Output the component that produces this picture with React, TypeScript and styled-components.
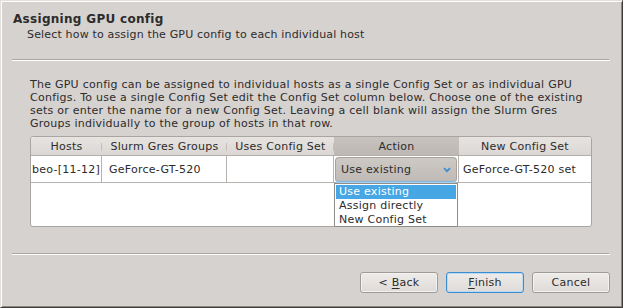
import React from "react";
import styled, { createGlobalStyle } from "styled-components";

const Global = createGlobalStyle`
  html, body { margin: 0; padding: 0; background: #d6d2d0; }
  * { box-sizing: border-box; }
`;

const Window = styled.div`
  width: 623px;
  height: 308px;
  background: #d6d2d0;
  border-top: 1px solid #e2dfdd;
  border-left: 1px solid #e2dfdd;
  border-right: 1px solid #3e3c3b;
  border-bottom: 1px solid #3e3c3b;
  box-shadow: inset 1px 1px 0 #ffffff, inset -1px -1px 0 #8c8884;
  font-family: "DejaVu Sans", "Liberation Sans", sans-serif;
  font-size: 11px;
  letter-spacing: 0.25px;
  color: #2c2c2c;
  display: flex;
  flex-direction: column;
  padding: 11px 12px 0 11px;
`;

const Title = styled.div`
  font-weight: bold;
  font-size: 12px;
  letter-spacing: 0.3px;
  line-height: 14px;
  padding-left: 1px;
`;

const Subtitle = styled.div`
  margin-top: 2px;
  line-height: 13px;
  padding-left: 15px;
  letter-spacing: 0.17px;
`;

const Separator = styled.div<{ $top: number }>`
  margin-top: ${(p) => p.$top}px;
  height: 2px;
  border-top: 1px solid #a9a5a1;
  border-bottom: 1px solid #ffffff;
  border-right: 1px solid #ffffff;
  width: 598px;
`;

const Body = styled.div`
  padding-left: 18px;
`;

const Paragraph = styled.p`
  margin: 17px 0 0 0;
  line-height: 13px;
  width: 564px;
`;

const TableFrame = styled.div`
  position: relative;
  margin-top: 6px;
  width: 562px;
  height: 91px;
  border: 1px solid #aaa5a0;
  border-radius: 3px;
  background: #ffffff;
`;

const Grid = styled.div`
  display: grid;
  grid-template-columns: 71px 125px 107px 125px 132px;
  overflow: hidden;
  border-radius: 3px 3px 0 0;
`;

const HeadCell = styled.div<{ $active?: boolean; $last?: boolean }>`
  position: relative;
  height: 19px;
  display: flex;
  align-items: center;
  justify-content: center;
  white-space: nowrap;
  background: ${(p) =>
    p.$active
      ? "linear-gradient(#c6c2be, #bdb8b4)"
      : "linear-gradient(#e6e3e0, #dbd7d4)"};
  border-bottom: 1px solid #b3aeaa;
  color: #2c2c2c;
  &::after {
    content: "";
    display: ${(p) => (p.$last ? "none" : "block")};
    position: absolute;
    right: 0;
    top: 6px;
    height: 8px;
    width: 1px;
    background: #c4bfbb;
  }
`;

const Cell = styled.div<{ $pad: number; $last?: boolean }>`
  height: 27px;
  display: flex;
  align-items: center;
  padding-left: ${(p) => p.$pad}px;
  border-right: ${(p) => (p.$last ? "none" : "1px solid #b8b3ae")};
  border-bottom: 1px solid #b8b3ae;
  white-space: nowrap;
  overflow: hidden;
  background: #ffffff;
`;

const ComboCell = styled.div`
  height: 27px;
  padding: 1px;
  border-right: 1px solid #b8b3ae;
  border-bottom: 1px solid #b8b3ae;
  background: #ffffff;
`;

const Combo = styled.div`
  height: 25px;
  border: 1px solid #a7a29d;
  border-bottom-color: #7fb6e2;
  border-radius: 4px;
  background: linear-gradient(#cdc9c5, #bfbab6);
  display: flex;
  align-items: center;
  justify-content: space-between;
  padding: 0 5px;
  box-shadow: 0 1px 0 #a9d1f0;
`;

const Dropdown = styled.div`
  position: absolute;
  left: 303px;
  top: 46px;
  width: 124px;
  height: 44px;
  background: #ffffff;
  border: 1px solid #8f8b87;
  padding: 1px;
  z-index: 2;
`;

const Item = styled.div<{ $selected?: boolean }>`
  height: 14px;
  line-height: 14px;
  padding-left: 3px;
  white-space: nowrap;
  background: ${(p) => (p.$selected ? "#47a6e4" : "transparent")};
  color: ${(p) => (p.$selected ? "#ffffff" : "#2c2c2c")};
`;

const ButtonRow = styled.div`
  margin-top: 17px;
  display: flex;
  justify-content: flex-end;
  gap: 8px;
  width: 598px;
`;

const Button = styled.div<{ $focus?: boolean }>`
  width: 78px;
  height: 21px;
  border: 1px solid ${(p) => (p.$focus ? "#3c8dd0" : "#a09b96")};
  border-radius: 3px;
  background: linear-gradient(#eeecea, #dedad7);
  box-shadow: ${(p) => (p.$focus ? "inset 0 0 0 1px #b9d8f1" : "inset 0 0 0 1px #f4f2f0")};
  display: flex;
  align-items: center;
  justify-content: center;
  color: #2c2c2c;
  u { text-decoration: underline; text-underline-offset: 2px; }
`;

const Chevron = () => (
  <svg width="8" height="6" viewBox="0 0 8 6">
    <path d="M1 1.2 L4 4.2 L7 1.2" fill="none" stroke="#3a8fd6" strokeWidth="1.8" />
  </svg>
);

export default function App() {
  return (
    <>
      <Global />
      <Window>
        <Title>Assigning GPU config</Title>
        <Subtitle>Select how to assign the GPU config to each individual host</Subtitle>
        <Separator $top={18} />
        <Body>
          <Paragraph>
            The GPU config can be assigned to individual hosts as a single Config Set or as individual GPU
            Configs. To use a single Config Set edit the Config Set column below. Choose one of the existing
            sets or enter the name for a new Config Set. Leaving a cell blank will assign the Slurm Gres
            Groups individually to the group of hosts in that row.
          </Paragraph>
          <TableFrame>
            <Grid>
              <HeadCell>Hosts</HeadCell>
              <HeadCell>Slurm Gres Groups</HeadCell>
              <HeadCell>Uses Config Set</HeadCell>
              <HeadCell $active>Action</HeadCell>
              <HeadCell $last>New Config Set</HeadCell>
              <Cell $pad={1}>beo-[11-12]</Cell>
              <Cell $pad={7}>GeForce-GT-520</Cell>
              <Cell $pad={4}></Cell>
              <ComboCell>
                <Combo>
                  <span>Use existing</span>
                  <Chevron />
                </Combo>
              </ComboCell>
              <Cell $pad={4} $last>GeForce-GT-520 set</Cell>
            </Grid>
            <Dropdown>
              <Item $selected>Use existing</Item>
              <Item>Assign directly</Item>
              <Item>New Config Set</Item>
            </Dropdown>
          </TableFrame>
        </Body>
        <Separator $top={26} />
        <ButtonRow>
          <Button>
            &lt;&nbsp;<u>B</u>ack
          </Button>
          <Button $focus>
            <u>F</u>inish
          </Button>
          <Button>Cancel</Button>
        </ButtonRow>
      </Window>
    </>
  );
}
